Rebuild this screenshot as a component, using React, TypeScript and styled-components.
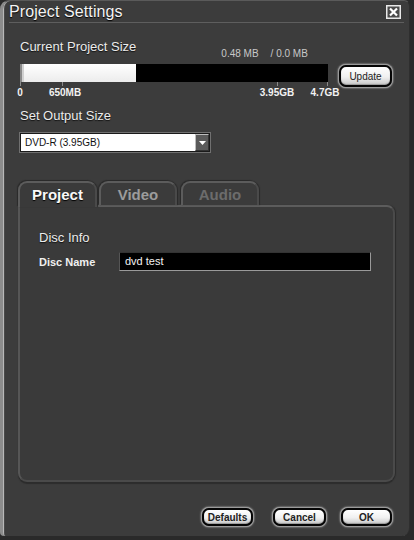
import React from "react";
import styled, { createGlobalStyle } from "styled-components";

const Global = createGlobalStyle`
  html, body { margin: 0; padding: 0; background: #2a2a2a; }
  body { width: 414px; height: 540px; overflow: hidden; font-family: "Liberation Sans", Arial, sans-serif; }
  * { box-sizing: border-box; }
`;

const Window = styled.div`
  width: 410px;
  height: 536px;
  background: #3c3c3c;
  border-left: 3px solid #8c8c8c;
  border-top: 1px solid #5a5a5a;
  border-right: 1px solid #2e2e2e;
  border-radius: 9px 6px 8px 4px;
  box-shadow: inset 1px 0 0 #b8b8b8, inset 2px 0 0 #4a4a4a;
  display: flex;
  flex-direction: column;
  color: #e6e6e6;
`;

const TitleBar = styled.div`
  height: 22px;
  margin: 0 5px 0 6px;
  display: flex;
  align-items: center;
  justify-content: space-between;
  border-bottom: 1px solid #5e5e5e;
`;

const Title = styled.div`
  font-size: 16px;
  color: #f4f4f4;
  line-height: 22px;
  letter-spacing: 0.1px;
  text-shadow: 0 1px 1px #000;
  margin-top: 1px;
`;

const CloseBox = styled.div`
  width: 15px;
  height: 14px;
  margin-right: 3px;
  display: flex;
`;

const Body = styled.div`
  flex: 1;
  display: flex;
  flex-direction: column;
  padding: 0 0 0 17px;
`;

const HeaderRow = styled.div`
  display: flex;
  align-items: flex-start;
  margin-top: 15px;
`;

const SectionLabel = styled.div<{ $top?: number }>`
  font-size: 13px;
  line-height: 15px;
  color: #ececec;
  text-shadow: 0 1px 1px #111;
  margin-top: ${(p) => p.$top ?? 0}px;
`;

const Readout = styled.div<{ $left: number }>`
  font-size: 10px;
  line-height: 12px;
  color: #c8c8c8;
  padding-top: 10px;
  margin-left: ${(p) => p.$left}px;
`;

const MeterRow = styled.div`
  display: flex;
  align-items: flex-start;
  margin-top: 3px;
`;

const MeterColumn = styled.div`
  display: flex;
  flex-direction: column;
  width: 308px;
`;

const Bar = styled.div`
  height: 18px;
  margin-top: 1px;
  background: #000;
  border-left: 2px solid #8a8a8a;
  display: flex;
`;

const Fill = styled.div`
  background: linear-gradient(#ffffff, #ececec);
  border-left: 2px solid #d0d0d0;
`;

const Scale = styled.div`
  position: relative;
  height: 16px;
`;

const Tick = styled.div`
  position: absolute;
  top: 0;
  width: 1px;
  height: 4px;
  background: #8a8a8a;
`;

const TickLabel = styled.div`
  position: absolute;
  top: 5px;
  transform: translateX(-50%);
  font-size: 10px;
  font-weight: bold;
  line-height: 11px;
  color: #f2f2f2;
  white-space: nowrap;
`;

const PillButton = styled.button<{ $w: number; $h: number; $light?: boolean }>`
  width: ${(p) => p.$w}px;
  height: ${(p) => p.$h}px;
  padding: 0;
  border: 2px solid #050505;
  border-radius: 7px;
  background: linear-gradient(#ffffff 0%, #f0f0f0 55%, #c8c8c8 100%);
  box-shadow: 0 0 0 1px #9a9a9a, 0 0 2px 1px #cfcfcf, inset 0 -1px 1px #9a9a9a;
  font-family: "Liberation Sans", Arial, sans-serif;
  font-size: 10px;
  font-weight: ${(p) => (p.$light ? "normal" : "bold")};
  color: #222;
  display: flex;
  align-items: center;
  justify-content: center;
`;

const UpdateWrap = styled.div`
  margin-left: 11px;
  margin-top: 2px;
`;

const Select = styled.div`
  margin-top: 10px;
  width: 190px;
  height: 19px;
  display: flex;
  background: #fff;
  border: 1px solid #1a1a1a;
  box-shadow: 0 0 0 1px #707070;
`;

const SelectText = styled.div`
  flex: 1;
  font-size: 10px;
  line-height: 17px;
  color: #111;
  padding-left: 4px;
`;

const SelectArrow = styled.div`
  width: 14px;
  background: #5a5a5a;
  border: 1px solid #bdbdbd;
  border-right-color: #333;
  border-bottom-color: #333;
  display: flex;
  align-items: center;
  justify-content: center;
`;

const TabArea = styled.div`
  flex: 1;
  display: flex;
  flex-direction: column;
  margin-top: 29px;
  margin-left: -2px;
  width: 377px;
`;

const TabList = styled.div`
  display: flex;
  gap: 2px;
  height: 24px;
  position: relative;
  z-index: 1;
`;

const Tab = styled.div<{ $state: "active" | "idle" | "disabled"; $w: number }>`
  width: ${(p) => p.$w}px;
  height: ${(p) => (p.$state === "active" ? 26 : 24)}px;
  margin-right: ${(p) => (p.$state === "active" ? 0 : 2)}px;
  border: 2px solid #5c5c5c;
  border-bottom: none;
  border-right-color: #4a4a4a;
  border-radius: 9px 9px 0 0;
  background: ${(p) => (p.$state === "active" ? "#3a3a3a" : "#3b3b3b")};
  box-shadow: -1px -1px 1px #2a2a2a, 1px 0 1px #2a2a2a;
  display: flex;
  justify-content: center;
  padding-top: 3px;
  font-size: 15px;
  font-weight: bold;
  line-height: 18px;
  color: ${(p) => (p.$state === "active" ? "#f8f8f8" : p.$state === "idle" ? "#9c9c9c" : "#6c6c6c")};
  text-shadow: ${(p) => (p.$state === "active" ? "0 1px 1px #000" : "none")};
`;

const Panel = styled.div`
  flex: 1;
  background: #3a3a3a;
  border: 2px solid #565656;
  border-top-color: #5c5c5c;
  border-right-color: #4a4a4a;
  border-bottom-color: #4a4a4a;
  border-radius: 0 8px 9px 9px;
  box-shadow: 0 2px 1px #2c2c2c, 1px 0 1px #2c2c2c;
  padding: 23px 0 0 19px;
  display: flex;
  flex-direction: column;
`;

const FieldRow = styled.div`
  display: flex;
  align-items: center;
  margin-top: 7px;
`;

const FieldLabel = styled.div`
  width: 80px;
  font-size: 11px;
  font-weight: bold;
  color: #f0f0f0;
`;

const TextField = styled.div`
  width: 252px;
  height: 19px;
  background: #000;
  border: 1px solid #9a9a9a;
  border-top-color: #333;
  border-left-color: #555;
  font-size: 11px;
  line-height: 17px;
  color: #f4f4f4;
  padding-left: 5px;
`;

const Footer = styled.div`
  display: flex;
  justify-content: flex-end;
  align-items: center;
  padding: 26px 17px 10px 0;
`;

const Spacer = styled.div<{ $w: number }>`
  width: ${(p) => p.$w}px;
`;

const ticks = [
  { at: 0, label: "0", lx: 0 },
  { at: 42, label: "650MB", lx: 45 },
  { at: 257, label: "3.95GB", lx: 257 },
  { at: 307, label: "4.7GB", lx: 305 },
];

export default function App() {
  return (
    <>
      <Global />
      <Window>
        <TitleBar>
          <Title>Project Settings</Title>
          <CloseBox>
            <svg width="15" height="14" viewBox="0 0 15 14">
              <rect x="0.75" y="0.75" width="13.5" height="12.5" fill="#4a4a4a" stroke="#e8e8e8" strokeWidth="1.5" />
              <path d="M4 3.5 L11 10.5 M11 3.5 L4 10.5" stroke="#ffffff" strokeWidth="2.2" />
            </svg>
          </CloseBox>
        </TitleBar>
        <Body>
          <HeaderRow>
            <SectionLabel $top={1}>Current Project Size</SectionLabel>
            <Readout $left={85}>0.48 MB</Readout>
            <Readout $left={12}>/ 0.0 MB</Readout>
          </HeaderRow>
          <MeterRow>
            <MeterColumn>
              <Bar>
                <Fill style={{ width: `${(115 / 308) * 100}%` }} />
              </Bar>
              <Scale>
                {ticks.map((t) => (
                  <Tick key={t.label} style={{ left: t.at }} />
                ))}
                {ticks.map((t) => (
                  <TickLabel key={t.label + "l"} style={{ left: t.lx }}>
                    {t.label}
                  </TickLabel>
                ))}
              </Scale>
            </MeterColumn>
            <UpdateWrap>
              <PillButton $w={53} $h={22} $light>Update</PillButton>
            </UpdateWrap>
          </MeterRow>
          <SectionLabel $top={10}>Set Output Size</SectionLabel>
          <Select>
            <SelectText>DVD-R (3.95GB)</SelectText>
            <SelectArrow>
              <svg width="7" height="4" viewBox="0 0 7 4">
                <path d="M0 0 H7 L3.5 4 Z" fill="#fff" />
              </svg>
            </SelectArrow>
          </Select>
          <TabArea>
            <TabList>
              <Tab $state="active" $w={79}>Project</Tab>
              <Tab $state="idle" $w={78}>Video</Tab>
              <Tab $state="disabled" $w={78}>Audio</Tab>
            </TabList>
            <Panel>
              <SectionLabel>Disc Info</SectionLabel>
              <FieldRow>
                <FieldLabel>Disc Name</FieldLabel>
                <TextField>dvd test</TextField>
              </FieldRow>
            </Panel>
          </TabArea>
        </Body>
        <Footer>
          <PillButton $w={51} $h={18}>Defaults</PillButton>
          <Spacer $w={20} />
          <PillButton $w={53} $h={18}>Cancel</PillButton>
          <Spacer $w={15} />
          <PillButton $w={51} $h={18}>OK</PillButton>
        </Footer>
      </Window>
    </>
  );
}
